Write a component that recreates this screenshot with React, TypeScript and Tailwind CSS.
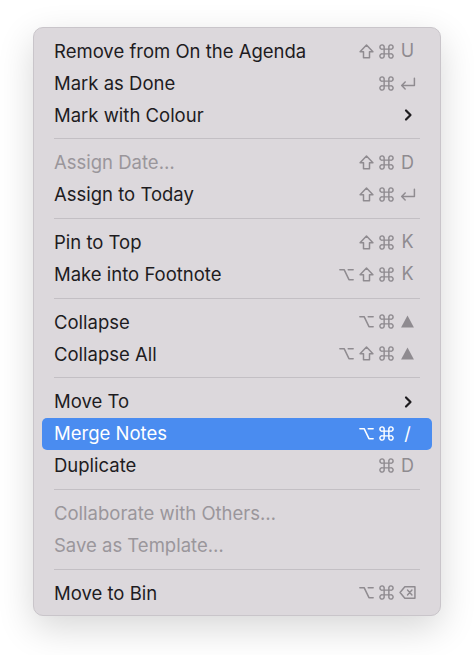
import type { ReactNode } from 'react';

type Glyph = 'shift' | 'cmd' | 'opt' | 'ret' | 'del' | 'up';

type Item =
  | { kind: 'sep' }
  | {
      kind: 'item';
      label: string;
      mods?: Glyph[];
      keyName?: string | Glyph;
      submenu?: boolean;
      disabled?: boolean;
      active?: boolean;
    };

const items: Item[] = [
  { kind: 'item', label: 'Remove from On the Agenda', mods: ['shift', 'cmd'], keyName: 'U' },
  { kind: 'item', label: 'Mark as Done', mods: ['cmd'], keyName: 'ret' },
  { kind: 'item', label: 'Mark with Colour', submenu: true },
  { kind: 'sep' },
  { kind: 'item', label: 'Assign Date…', mods: ['shift', 'cmd'], keyName: 'D', disabled: true },
  { kind: 'item', label: 'Assign to Today', mods: ['shift', 'cmd'], keyName: 'ret' },
  { kind: 'sep' },
  { kind: 'item', label: 'Pin to Top', mods: ['shift', 'cmd'], keyName: 'K' },
  { kind: 'item', label: 'Make into Footnote', mods: ['opt', 'shift', 'cmd'], keyName: 'K' },
  { kind: 'sep' },
  { kind: 'item', label: 'Collapse', mods: ['opt', 'cmd'], keyName: 'up' },
  { kind: 'item', label: 'Collapse All', mods: ['opt', 'shift', 'cmd'], keyName: 'up' },
  { kind: 'sep' },
  { kind: 'item', label: 'Move To', submenu: true },
  { kind: 'item', label: 'Merge Notes', mods: ['opt', 'cmd'], keyName: '/', active: true },
  { kind: 'item', label: 'Duplicate', mods: ['cmd'], keyName: 'D' },
  { kind: 'sep' },
  { kind: 'item', label: 'Collaborate with Others…', disabled: true },
  { kind: 'item', label: 'Save as Template…', disabled: true },
  { kind: 'sep' },
  { kind: 'item', label: 'Move to Bin', mods: ['opt', 'cmd'], keyName: 'del' },
];

const glyphNames: Glyph[] = ['shift', 'cmd', 'opt', 'ret', 'del', 'up'];

// Key glyphs drawn by hand so they look like the macOS ones.
function KeyGlyph({ name }: { name: Glyph }) {
  const common = {
    width: 15,
    height: 15,
    viewBox: '0 0 14 14',
    fill: 'none',
    stroke: 'currentColor',
    strokeWidth: 1.4,
    strokeLinejoin: 'round' as const,
    strokeLinecap: 'round' as const,
  };
  switch (name) {
    case 'shift':
      return (
        <svg {...common}>
          <path d="M7 1 L13 7.2 H9.8 V12.8 H4.2 V7.2 H1 Z" />
        </svg>
      );
    case 'cmd':
      return (
        <svg {...common} strokeWidth={1.35}>
          <path d="M4.8 4.8 H9.2 V9.2 H4.8 Z M4.8 4.8 V3.2 A2 2 0 1 0 3.2 4.8 H4.8 M9.2 4.8 H10.8 A2 2 0 1 0 9.2 3.2 V4.8 M9.2 9.2 V10.8 A2 2 0 1 0 10.8 9.2 H9.2 M4.8 9.2 H3.2 A2 2 0 1 0 4.8 10.8 V9.2" />
        </svg>
      );
    case 'opt':
      return (
        <svg {...common}>
          <path d="M0.8 2.5 H4.8 L9.3 11.8 H13.2 M8.6 2.5 H13.2" />
        </svg>
      );
    case 'ret':
      return (
        <svg {...common} width={17} viewBox="0 0 16 14">
          <path d="M14.5 2 V8.8 H2.5 M5.8 5.5 L2.5 8.8 L5.8 12.1" />
        </svg>
      );
    case 'del':
      return (
        <svg {...common} width={17} viewBox="0 0 16 14">
          <path d="M5.5 1.5 H15 V12.5 H5.5 L1 7 Z" />
          <path d="M8 4.6 L12.2 9.4 M12.2 4.6 L8 9.4" strokeWidth={1.3} />
        </svg>
      );
    case 'up':
      return (
        <svg width={15} height={15} viewBox="0 0 14 14">
          <path d="M7 1.5 L13 12.5 H1 Z" fill="currentColor" />
        </svg>
      );
  }
}

function Shortcut({ mods, keyName }: { mods: Glyph[]; keyName: string | Glyph }) {
  const isGlyph = (glyphNames as string[]).includes(keyName);
  return (
    <div className="flex items-center gap-[5px]">
      {mods.map((m, i) => (
        <span key={i} className="flex w-[15px] justify-center">
          <KeyGlyph name={m} />
        </span>
      ))}
      <span className="flex w-[17px] justify-center">
        {isGlyph ? <KeyGlyph name={keyName as Glyph} /> : keyName}
      </span>
    </div>
  );
}

function Chevron() {
  return (
    <svg width={10} height={14} viewBox="0 0 10 14" fill="none" stroke="currentColor" strokeWidth={2.2} strokeLinecap="round" strokeLinejoin="round">
      <path d="M3 2.5 L7.5 7 L3 11.5" />
    </svg>
  );
}

function Row({ item }: { item: Extract<Item, { kind: 'item' }> }) {
  const textColor = item.active
    ? 'text-white'
    : item.disabled
      ? 'text-[#9a969b]'
      : 'text-[#1e1c1f]';
  const shortcutColor = item.active ? 'text-white' : 'text-[#8f8b90]';
  let right: ReactNode = null;
  if (item.submenu) {
    right = (
      <span className="flex w-[17px] justify-center text-[#1e1c1f]">
        <Chevron />
      </span>
    );
  } else if (item.mods && item.keyName) {
    right = <Shortcut mods={item.mods} keyName={item.keyName} />;
  }
  return (
    <div
      className={`mx-[8px] flex h-[32px] items-center justify-between rounded-[5px] pl-[12px] pr-[16px] ${
        item.active ? 'bg-[#4a8cf0]' : ''
      }`}
    >
      <span className={textColor}>{item.label}</span>
      <span className={`${shortcutColor} text-[18px]`}>{right}</span>
    </div>
  );
}

export default function App() {
  return (
    <div className="flex min-h-[655px] w-[474px] justify-center bg-white pt-[27px]" style={{ fontFamily: 'Inter, "Noto Sans", sans-serif' }}>
      <div className="h-[589px] w-[408px] rounded-[10px] border border-[#c9c5ca] bg-[#dcd8dc] pt-[7px] text-[18.5px] leading-none shadow-[0_12px_36px_rgba(0,0,0,0.16)]">
        {items.map((item, i) =>
          item.kind === 'sep' ? (
            <div key={i} className="flex h-[15.67px] items-center px-[20px]">
              <div className="h-px w-full bg-[#c3bfc4]" />
            </div>
          ) : (
            <Row key={i} item={item} />
          ),
        )}
      </div>
    </div>
  );
}
